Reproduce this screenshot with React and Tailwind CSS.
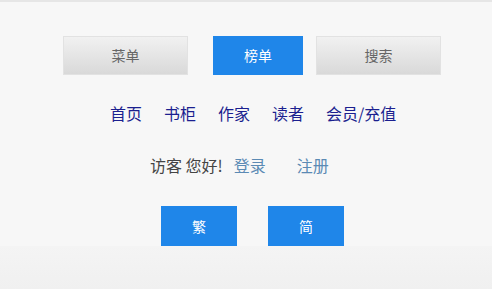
export default function App() {
  const font = { fontFamily: '"Microsoft YaHei", "Noto Sans CJK SC", sans-serif' };
  return (
    <div
      className="w-[492px] h-[289px] bg-[#f7f7f7] border-t-2 border-[#e6e6e6] flex flex-col overflow-hidden"
      style={font}
    >
      <div className="flex flex-col flex-1">
        <div className="flex pl-[63px] pt-[34px] gap-[25px]">
          <div className="w-[125px] h-[39px] flex items-center justify-center border border-[#e2e2e2] bg-gradient-to-b from-[#f1f1f1] to-[#d9d9d9] text-[14px] text-[#666]">
            菜单
          </div>
          <div className="w-[90px] h-[39px] flex items-center justify-center bg-[#1f86e9] text-[14px] text-white">
            榜单
          </div>
          <div className="w-[125px] h-[39px] -ml-[12px] flex items-center justify-center border border-[#e2e2e2] bg-gradient-to-b from-[#f1f1f1] to-[#d9d9d9] text-[14px] text-[#666]">
            搜索
          </div>
        </div>
        <div className="flex pl-[110px] mt-[27px] gap-[22px] text-[16px] leading-[22px] text-[#1b1f8f]">
          <span>首页</span>
          <span>书柜</span>
          <span>作家</span>
          <span>读者</span>
          <span>会员/充值</span>
        </div>
        <div className="flex pl-[150px] mt-[30px] text-[16px] leading-[22px] text-[#444]">
          <span>访客 您好!</span>
          <span className="ml-[11px] text-[#5b8ab4]">登录</span>
          <span className="ml-[31px] text-[#5b8ab4]">注册</span>
        </div>
        <div className="flex pl-[161px] mt-[30px] gap-[31px]">
          <div className="w-[76px] h-[40px] flex items-center justify-center bg-[#1f86e9] text-[14px] text-white">繁</div>
          <div className="w-[76px] h-[40px] flex items-center justify-center bg-[#1f86e9] text-[14px] text-white">简</div>
        </div>
      </div>
      <div className="h-[43px] bg-gradient-to-b from-[#f4f4f4] to-[#f0f0f0]"></div>
    </div>
  );
}
